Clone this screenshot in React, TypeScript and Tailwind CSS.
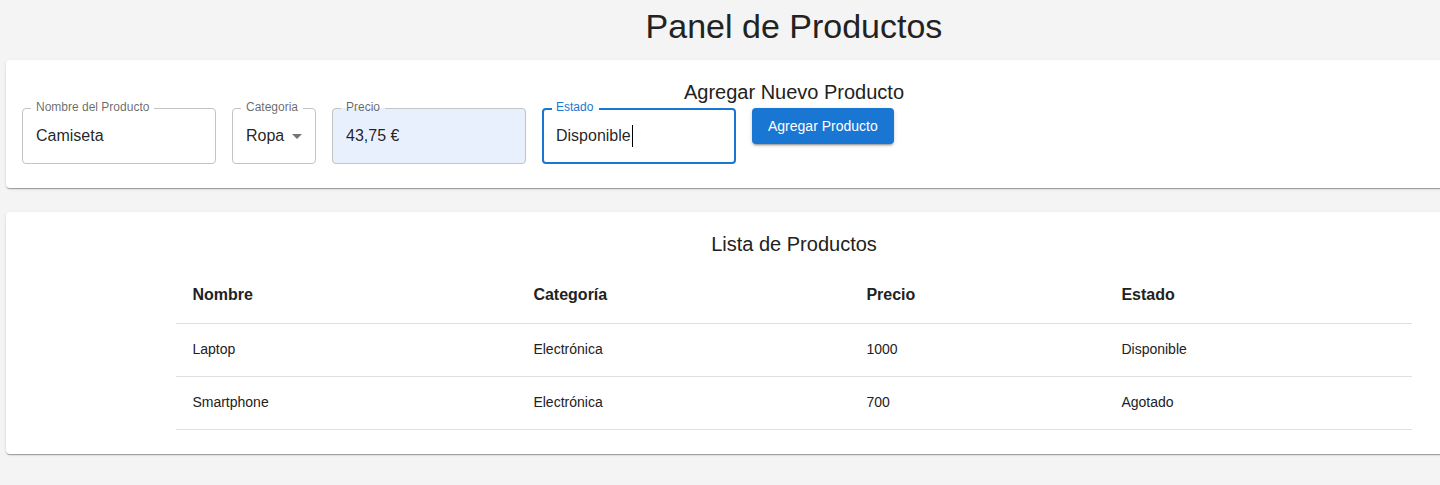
const productos = [
  { nombre: 'Laptop', categoria: 'Electrónica', precio: 1000, estado: 'Disponible' },
  { nombre: 'Smartphone', categoria: 'Electrónica', precio: 700, estado: 'Agotado' },
];

function OutlinedField({
  label,
  value,
  width,
  focused = false,
  autofill = false,
  select = false,
}: {
  label: string;
  value: string;
  width: string;
  focused?: boolean;
  autofill?: boolean;
  select?: boolean;
}) {
  return (
    <div className={`relative h-[56px] ${width}`}>
      {/* Outline with notch */}
      <fieldset
        className={`absolute inset-x-0 bottom-0 -top-[5px] m-0 rounded-[4px] px-[8px] ${
          focused ? 'border-2 border-[#1976d2]' : 'border border-[#c4c4c4]'
        } ${autofill ? 'bg-[#e8f0fe]' : ''}`}
      >
        <legend className="invisible px-[5px] text-[12px] leading-[11px] h-[11px] whitespace-nowrap">{label}</legend>
      </fieldset>
      <label
        className={`absolute left-[14px] -top-[9px] text-[12px] leading-[16px] whitespace-nowrap ${
          focused ? 'text-[#1976d2]' : 'text-black/60'
        }`}
      >
        {label}
      </label>
      <div className="relative flex h-full items-center px-[14px] text-[16px] text-black/[0.87]">
        <span>{value}</span>
        {focused && <span className="ml-px inline-block h-[22px] w-px bg-black" />}
        {select && (
          <svg className="absolute right-[7px] top-[16px] h-6 w-6 text-black/[0.54]" viewBox="0 0 24 24" fill="currentColor">
            <path d="M7 10l5 5 5-5z" />
          </svg>
        )}
      </div>
    </div>
  );
}

export default function App() {
  return (
    <div className="w-[1440px] overflow-hidden bg-[#f4f4f4] min-h-[485px] font-['Liberation_Sans',Arial,sans-serif] text-black/[0.87]">
      <div className="w-[1588px] px-[6px] pb-[31px]">
        {/* Title */}
        <h1 className="pt-[5px] mb-[13px] text-center text-[34px] leading-[42px] font-normal text-[#222]">
          Panel de Productos
        </h1>

        {/* Add product form */}
        <div className="rounded-[4px] bg-white px-4 pt-4 pb-6 shadow-[0px_2px_1px_-1px_rgba(0,0,0,0.2),0px_1px_1px_0px_rgba(0,0,0,0.14),0px_1px_3px_0px_rgba(0,0,0,0.12)]">
          <h2 className="text-center text-[20px] leading-[32px] font-normal text-[#222]">Agregar Nuevo Producto</h2>
          <div className="flex items-start gap-4">
            <OutlinedField label="Nombre del Producto" value="Camiseta" width="w-[194px]" />
            <OutlinedField label="Categoria" value="Ropa" width="w-[84px]" select />
            <OutlinedField label="Precio" value="43,75 €" width="w-[194px]" autofill />
            <OutlinedField label="Estado" value="Disponible" width="w-[194px]" focused />
            <button className="h-[36px] rounded-[4px] bg-[#1976d2] px-4 text-[14px] text-white shadow-[0px_3px_1px_-2px_rgba(0,0,0,0.2),0px_2px_2px_0px_rgba(0,0,0,0.14),0px_1px_5px_0px_rgba(0,0,0,0.12)]">
              Agregar Producto
            </button>
          </div>
        </div>

        {/* Product list */}
        <div className="mt-6 rounded-[4px] bg-white px-4 pt-4 pb-6 shadow-[0px_2px_1px_-1px_rgba(0,0,0,0.2),0px_1px_1px_0px_rgba(0,0,0,0.14),0px_1px_3px_0px_rgba(0,0,0,0.12)]">
          <h2 className="mb-[7px] text-center text-[20px] leading-[32px] font-normal text-[#222]">Lista de Productos</h2>
          <table className="mx-auto w-[80%] border-collapse text-left">
            <colgroup>
              <col className="w-[341px]" />
              <col className="w-[333px]" />
              <col className="w-[255px]" />
              <col />
            </colgroup>
            <thead>
              <tr className="border-b border-[#e0e0e0]">
                <th className="h-[56px] px-4 text-[16px] font-bold text-[#222]">Nombre</th>
                <th className="h-[56px] px-4 text-[16px] font-bold text-[#222]">Categoría</th>
                <th className="h-[56px] px-4 text-[16px] font-bold text-[#222]">Precio</th>
                <th className="h-[56px] px-4 text-[16px] font-bold text-[#222]">Estado</th>
              </tr>
            </thead>
            <tbody>
              {productos.map((p) => (
                <tr key={p.nombre} className="border-b border-[#e0e0e0]">
                  <td className="h-[53px] px-4 text-[14px] text-[#222]">{p.nombre}</td>
                  <td className="h-[53px] px-4 text-[14px] text-[#222]">{p.categoria}</td>
                  <td className="h-[53px] px-4 text-[14px] text-[#222]">{p.precio}</td>
                  <td className="h-[53px] px-4 text-[14px] text-[#222]">{p.estado}</td>
                </tr>
              ))}
            </tbody>
          </table>
        </div>
      </div>
    </div>
  );
}
